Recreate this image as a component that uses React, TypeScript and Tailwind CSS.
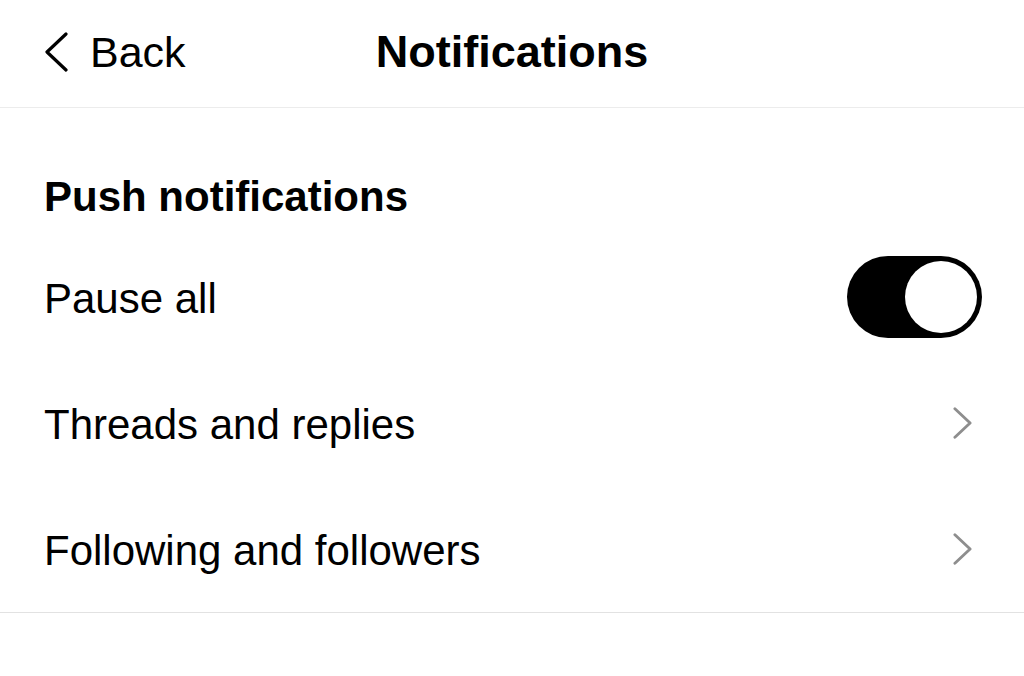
import * as React from 'react';

const Chevron = ({ className }: { className?: string }) => (
  <svg viewBox="0 0 20 34" className={className} fill="none" stroke="currentColor" strokeWidth={3} strokeLinecap="round" strokeLinejoin="round">
    <path d="M2 2 L18 17 L2 32" />
  </svg>
);

const Row = ({ label, children }: { label: string; children?: React.ReactNode }) => (
  <div className="flex items-center justify-between h-[126px] pl-[44px] pr-[42px]">
    <span className="text-[42px] text-black mt-[2px]">{label}</span>
    {children}
  </div>
);

export default function App() {
  return (
    <div className="w-[1024px] h-[676px] bg-white overflow-hidden" style={{ fontFamily: '"Liberation Sans", Arial, sans-serif' }}>
      <header className="relative flex items-center justify-center h-[108px] border-b border-[#ececec]">
        <button className="absolute left-[44px] top-[29px] flex items-center gap-[22px] text-black">
          <svg viewBox="0 0 24 40" className="w-[24px] h-[40px]" fill="none" stroke="currentColor" strokeWidth={3.2} strokeLinecap="round" strokeLinejoin="round">
            <path d="M22 2 L3 20 L22 38" />
          </svg>
          <span className="text-[43px] leading-none mt-[2px]">Back</span>
        </button>
        <h1 className="text-[45px] font-bold text-black -mt-[4px]">Notifications</h1>
      </header>

      <section className="border-b border-[#e2e2e2]">
        <h2 className="pt-[64px] pb-[12px] pl-[44px] text-[42px] leading-[50px] font-bold text-black">Push notifications</h2>
        <Row label="Pause all">
          <div className="flex items-center justify-end w-[135px] h-[82px] rounded-full bg-black p-[5px]">
            <div className="w-[72px] h-[72px] rounded-full bg-white" />
          </div>
        </Row>
        <Row label="Threads and replies">
          <Chevron className="w-[19px] h-[34px] mr-[10px] text-[#8e8e8e]" />
        </Row>
        <Row label="Following and followers">
          <Chevron className="w-[19px] h-[34px] mr-[10px] text-[#8e8e8e]" />
        </Row>
      </section>
    </div>
  );
}
